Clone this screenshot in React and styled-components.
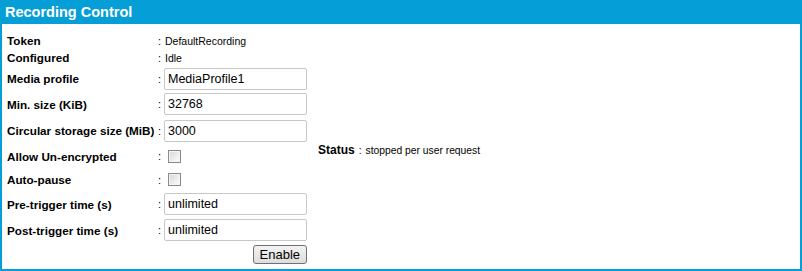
import React from "react";
import styled, { createGlobalStyle } from "styled-components";

const Global = createGlobalStyle`
  html, body {
    margin: 0;
    padding: 0;
    background: #ffffff;
  }
  body {
    font-family: "Liberation Sans", Arial, sans-serif;
  }
`;

const Panel = styled.div`
  box-sizing: border-box;
  width: 802px;
  height: 271px;
  border: 2px solid #069ed6;
  border-top: none;
  background: #ffffff;
  display: flex;
  flex-direction: column;
`;

const Header = styled.div`
  height: 24px;
  margin: 0 -2px;
  background: #069ed6;
  color: #ffffff;
  font-weight: bold;
  font-size: 14.5px;
  line-height: 24px;
  padding-left: 5px;
`;

const Body = styled.div`
  display: flex;
  align-items: center;
  padding: 8px 0 0 5px;
`;

const Form = styled.div`
  display: grid;
  grid-template-columns: 151px 6px 143px;
`;

const Row = styled.div`
  display: contents;
  & > * {
    height: ${(p) => p.$h}px;
    display: flex;
    align-items: center;
  }
`;

const Label = styled.div`
  font-weight: bold;
  font-size: 11.7px;
  color: #000;
  white-space: nowrap;
`;

const Colon = styled.div`
  font-size: 11px;
  color: #000;
`;

const Value = styled.div`
  font-size: 10.5px;
  color: #000;
  padding-left: 1px;
`;

const Field = styled.div`
  box-sizing: border-box;
  width: 143px;
  height: 22px;
  border: 1px solid #c8c8c8;
  border-radius: 2px;
  padding-left: 3px;
  font-size: 12.5px;
  line-height: 20px;
  color: #000;
  background: #fff;
`;

const Check = styled.div`
  box-sizing: border-box;
  width: 13px;
  height: 13px;
  margin-left: 4px;
  border: 1px solid #8a8a8a;
  background: linear-gradient(135deg, #d6d6d6 0%, #eeeeee 60%, #ffffff 100%);
  box-shadow: inset 0 0 0 1px #f4f4f4;
`;

const Actions = styled.div`
  justify-content: flex-end;
`;

const Button = styled.div`
  box-sizing: border-box;
  height: 19px;
  padding: 0 6px;
  border: 1px solid #707070;
  border-radius: 3px;
  background: linear-gradient(#f3f3f3, #dddddd);
  font-size: 13px;
  line-height: 17px;
  color: #000;
`;

const Status = styled.div`
  margin: 3px 0 0 11px;
  display: flex;
  align-items: baseline;
  gap: 4px;
`;

const StatusLabel = styled.span`
  font-weight: bold;
  font-size: 12px;
`;

const StatusText = styled.span`
  font-size: 10.3px;
`;

const rows = [
  { label: "Token", h: 17, text: "DefaultRecording" },
  { label: "Configured", h: 17, text: "Idle" },
  { label: "Media profile", h: 25, field: "MediaProfile1" },
  { label: "Min. size (KiB)", h: 26, field: "32768" },
  { label: "Circular storage size (MiB)", h: 27, field: "3000" },
  { label: "Allow Un-encrypted", h: 24, check: true },
  { label: "Auto-pause", h: 23, check: true },
  { label: "Pre-trigger time (s)", h: 26, field: "unlimited" },
  { label: "Post-trigger time (s)", h: 26, field: "unlimited" },
];

export default function App() {
  return (
    <>
      <Global />
      <Panel>
        <Header>Recording Control</Header>
        <Body>
          <Form>
            {rows.map((r) => (
              <Row key={r.label} $h={r.h}>
                <Label>{r.label}</Label>
                <Colon>:</Colon>
                {r.text && <Value>{r.text}</Value>}
                {r.field && (
                  <div>
                    <Field>{r.field}</Field>
                  </div>
                )}
                {r.check && (
                  <div>
                    <Check />
                  </div>
                )}
              </Row>
            ))}
            <Row $h={22}>
              <div />
              <div />
              <Actions>
                <Button>Enable</Button>
              </Actions>
            </Row>
          </Form>
          <Status>
            <StatusLabel>Status</StatusLabel>
            <StatusText>:</StatusText>
            <StatusText>stopped per user request</StatusText>
          </Status>
        </Body>
      </Panel>
    </>
  );
}
